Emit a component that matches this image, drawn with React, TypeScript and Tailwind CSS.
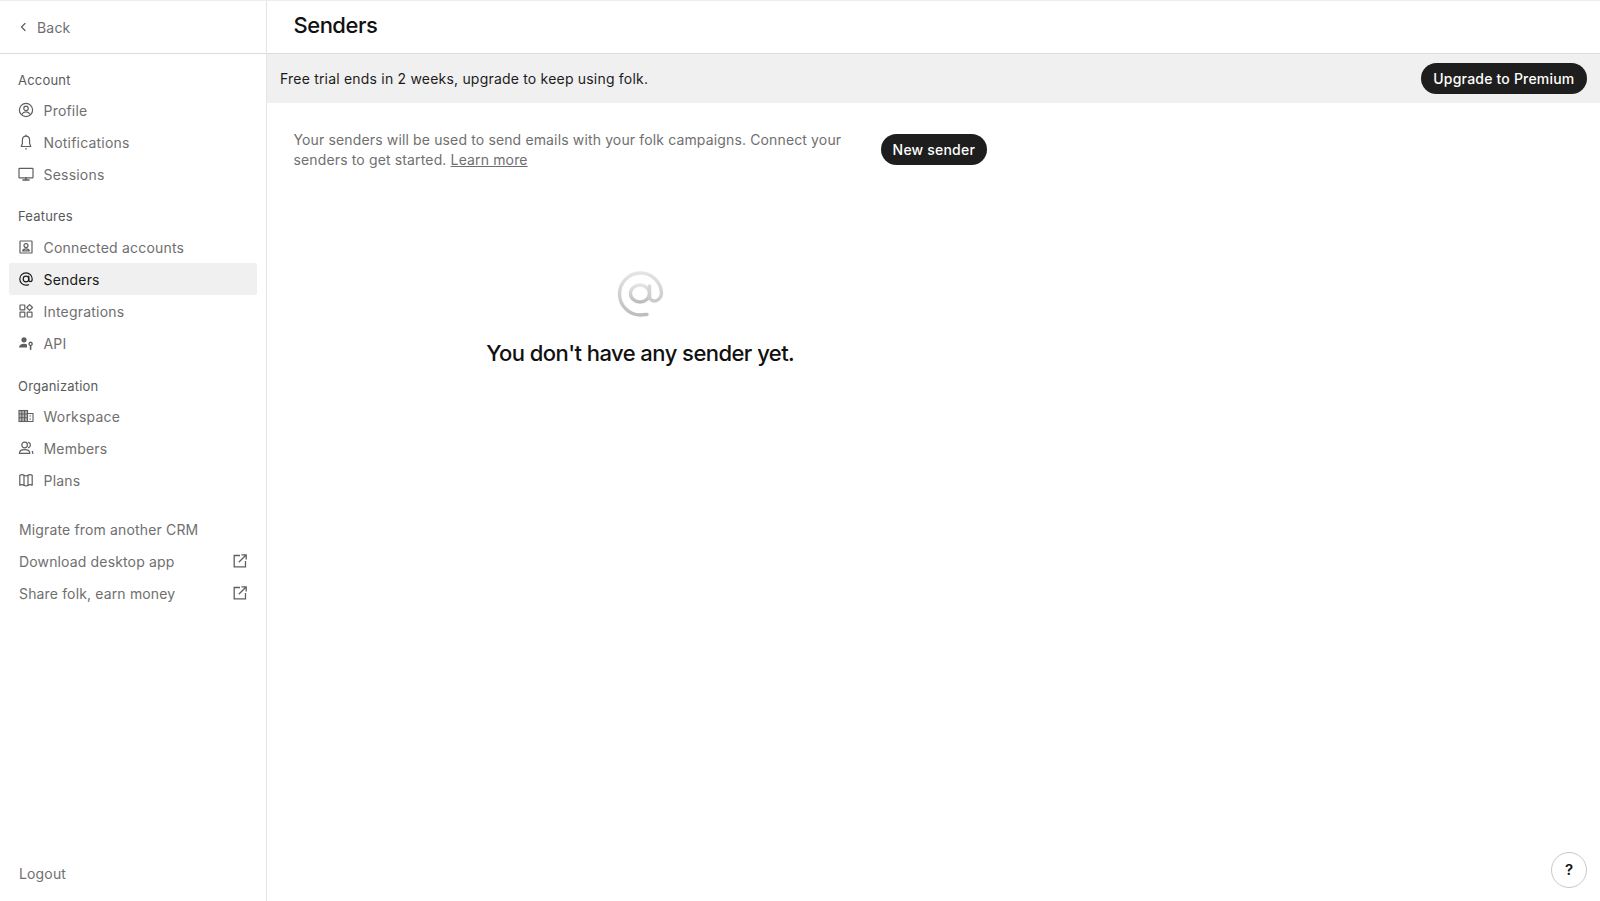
import React from "react";

const S = ({ children, size = 16 }: { children: React.ReactNode; size?: number }) => (
  <svg width={size} height={size} viewBox="0 0 16 16" fill="none" stroke="currentColor" strokeWidth="1.2" strokeLinecap="round" strokeLinejoin="round" className="shrink-0">
    {children}
  </svg>
);

const icons: Record<string, React.ReactNode> = {
  profile: <S><circle cx="8" cy="8" r="6.6" /><circle cx="8" cy="6.4" r="2.2" /><path d="M4 12.2c.8-1.7 2.2-2.3 4-2.3s3.2.6 4 2.3" /></S>,
  bell: <S><path d="M8 2.2c-2.4 0-3.6 1.9-3.6 4v3.3L3.200 12.500h9.600l-1.200-3V6.200c0-2.100-1.200-4-3.600-4z" /><path d="M8 1.200v1M7.600 14.800h.8" /></S>,
  monitor: <S><rect x="1" y="2.400" width="14" height="9.400" rx=".6" /><path d="M8 11.800v1.800M5 14h6" strokeWidth="1.6" /></S>,
  connected: <S><rect x="2" y="2" width="12" height="12" rx=".6" /><circle cx="8" cy="6.600" r="2" /><path d="M4.600 11.800c.6-1.600 1.900-2 3.400-2s2.800.4 3.400 2z" /></S>,
  at: <S><circle cx="8" cy="8" r="2.800" /><path d="M10.800 5.200v3.700c0 1 .7 1.700 1.600 1.700s1.800-1 1.800-2.600A6.200 6.200 0 1 0 8 14.200c1 0 1.700-.1 2.600-.5" /></S>,
  integrations: <S><rect x="2" y="2" width="4.800" height="4.800" rx=".4" /><path d="M11.600 1.600l2.900 2.900-2.900 2.900-2.900-2.900z" /><rect x="2" y="9.200" width="4.800" height="4.800" rx=".4" /><rect x="9.200" y="9.200" width="4.800" height="4.800" rx=".4" /></S>,
  api: (
    <svg width="16" height="16" viewBox="0 0 16 16" fill="currentColor" className="shrink-0">
      <circle cx="6" cy="4.800" r="2.600" />
      <path d="M1 12.600c0-2.400 2.200-3.800 5-3.800 1.200 0 2.200.3 3 .7v3.100z" />
      <path fillRule="evenodd" d="M12.600 6.600a2.300 2.300 0 0 1 .8 4.450v3.350l-.8.8-.8-.8v-3.350a2.300 2.300 0 0 1 .8-4.450zm0 1.400a.9.9 0 1 0 0 1.800.9.9 0 0 0 0-1.800z" />
    </svg>
  ),
  workspace: (
    <svg width="16" height="16" viewBox="0 0 16 16" fill="none" stroke="currentColor" strokeWidth="1.100" className="shrink-0">
      <rect x="1" y="2.500" width="8.500" height="11" fill="currentColor" fillOpacity=".45" />
      <path d="M3.800 2.500v11M6.600 2.500v11M1 6h8.500M1 9.800h8.500" stroke="currentColor" />
      <path d="M9.500 5.500H15v8H9.500" />
      <path d="M11.500 8h1.500M11.500 11h1.500" />
    </svg>
  ),
  members: <S><circle cx="6.600" cy="5" r="2.800" /><path d="M1.400 13.400c0-2.600 2.300-3.800 5.200-3.800s5.200 1.200 5.200 3.800z" /><path d="M10.500 2.400c1.200.4 1.900 1.400 1.900 2.600s-.7 2.200-1.900 2.600M14.800 13.400c0-.7-.2-1.400-.6-2" /></S>,
  plans: <S><path d="M1.800 3.200c1.500-.8 3-.8 4.200 0 1.200.8 2.800.8 4 0 1.200-.8 2.800-.8 4.200 0v10c-1.400-.8-3-.8-4.200 0-1.200.8-2.800.8-4 0-1.200-.8-2.700-.8-4.200 0z" /><path d="M6 3.400v10M10 3.400v10" /></S>,
};

const External = () => (
  <svg width="16" height="16" viewBox="0 0 16 16" fill="none" stroke="currentColor" strokeWidth="1.300" className="shrink-0">
    <path d="M8 2.500H2.200v11.300h11.300V8" />
    <path d="M6.800 9.200L14 2M9.500 1.800h4.700v4.700" />
  </svg>
);

const Item = ({ icon, label, active }: { icon: string; label: string; active?: boolean }) => (
  <div className={`mx-[9px] flex h-[32px] w-[248px] items-center gap-[9.500px] rounded-[2px] pl-[9px] ${active ? "bg-[#f0f0f0] text-[#1a1a1a]" : "text-[#6f6f6f]"}`}>
    <span className={active ? "text-[#1a1a1a]" : "text-[#5f5f5f]"}>{icons[icon]}</span>
    <span className="text-[14px] tracking-[0.2px]">{label}</span>
  </div>
);

const Heading = ({ children }: { children: React.ReactNode }) => (
  <div className="flex h-[22px] items-center pl-[18px] text-[13px] tracking-[0.2px] text-[#5a5a5a]">{children}</div>
);

const Link = ({ label, external }: { label: string; external?: boolean }) => (
  <div className="flex h-[32px] items-center justify-between pl-[19px] pr-[18px] text-[14px] tracking-[0.15px] text-[#6f6f6f]">
    <span>{label}</span>
    {external && <span className="text-[#5f5f5f]"><External /></span>}
  </div>
);

export default function App() {
  return (
    <div className="flex h-[901px] w-[1600px] overflow-hidden border-t border-[#ececec] bg-white font-['Inter',sans-serif]">
      <aside className="flex w-[267px] shrink-0 flex-col border-r border-[#e4e4e4]">
        <div className="flex h-[53px] shrink-0 items-center gap-[7px] border-b border-[#dcdcdc] pl-[16px] text-[14px] tracking-[0.2px] text-[#6f6f6f]">
          <svg width="14" height="14" viewBox="0 0 14 14" fill="none" stroke="#5f5f5f" strokeWidth="1.200" strokeLinecap="round" strokeLinejoin="round"><path d="M9 3.500L5.500 7 9 10.500" /></svg>
          <span>Back</span>
        </div>
        <div className="flex flex-1 flex-col pt-[16px]">
          <Heading>Account</Heading>
          <div className="mt-[2px] flex flex-col">
            <Item icon="profile" label="Profile" />
            <Item icon="bell" label="Notifications" />
            <Item icon="monitor" label="Sessions" />
          </div>
          <div className="mt-[16px]"><Heading>Features</Heading></div>
          <div className="mt-[3px] flex flex-col">
            <Item icon="connected" label="Connected accounts" />
            <Item icon="at" label="Senders" active />
            <Item icon="integrations" label="Integrations" />
            <Item icon="api" label="API" />
          </div>
          <div className="mt-[17px]"><Heading>Organization</Heading></div>
          <div className="mt-[2px] flex flex-col">
            <Item icon="workspace" label="Workspace" />
            <Item icon="members" label="Members" />
            <Item icon="plans" label="Plans" />
          </div>
          <div className="mt-[17px] flex flex-col">
            <Link label="Migrate from another CRM" />
            <Link label="Download desktop app" external />
            <Link label="Share folk, earn money" external />
          </div>
          <div className="mt-auto pb-[12px]"><Link label="Logout" /></div>
        </div>
      </aside>
      <main className="relative flex min-w-0 flex-1 flex-col">
        <div className="flex h-[53px] shrink-0 items-center border-b border-[#dcdcdc] pb-[3px] pl-[26.500px] text-[22px] font-medium tracking-[-0.5px] text-[#111]">Senders</div>
        <div className="flex h-[49px] shrink-0 items-center justify-between bg-[#f0f0f0] pl-[13px] pr-[13px]">
          <span className="text-[14px] tracking-[0.2px] text-[#1c1c1c]">Free trial ends in 2 weeks, upgrade to keep using folk.</span>
          <button className="flex h-[31px] items-center whitespace-nowrap rounded-full bg-[#1e1e1e] px-[12.500px] text-[14px] font-medium tracking-[0.2px] text-white">Upgrade to Premium</button>
        </div>
        <div className="flex w-[746px] flex-col pl-[26.500px] pr-[26px]">
          <div className="mt-[27px] flex items-center justify-between">
            <p className="w-[565px] text-[14px] leading-[20px] tracking-[0.14px] text-[#6f6f6f]">
              Your senders will be used to send emails with your folk campaigns. Connect your senders to get started. <span className="underline">Learn more</span>
            </p>
            <button className="mb-[2px] flex h-[31px] items-center whitespace-nowrap rounded-full bg-[#1e1e1e] px-[12px] text-[14px] font-medium tracking-[0.2px] text-white">New sender</button>
          </div>
          <div className="mt-[100px] flex flex-col items-center">
            <svg width="48" height="48" viewBox="0 0 48 48" fill="none" stroke="url(#atFade)" strokeWidth="3.400" strokeLinecap="round">
              <defs>
                <linearGradient id="atFade" x1="0" y1="0" x2="0" y2="1">
                  <stop offset="0" stopColor="#e4e4e4" />
                  <stop offset="1" stopColor="#bdbdbd" />
                </linearGradient>
              </defs>
              <ellipse cx="24" cy="23.500" rx="9.500" ry="8.500" />
              <path d="M33.500 16v10c0 3 2 5 5 5s7-3 7-8A21 21 0 1 0 24 45c3 0 4-.2 7-.6" />
            </svg>
            <div className="mt-[19px] text-[22px] font-medium tracking-[-0.55px] text-[#111]">You don't have any sender yet.</div>
          </div>
        </div>
        <div className="absolute right-[13px] top-[851px] flex h-[36px] w-[36px] items-center justify-center rounded-full border border-[#c8c8c8] bg-white text-[15px] font-semibold text-[#111]">?</div>
      </main>
    </div>
  );
}
